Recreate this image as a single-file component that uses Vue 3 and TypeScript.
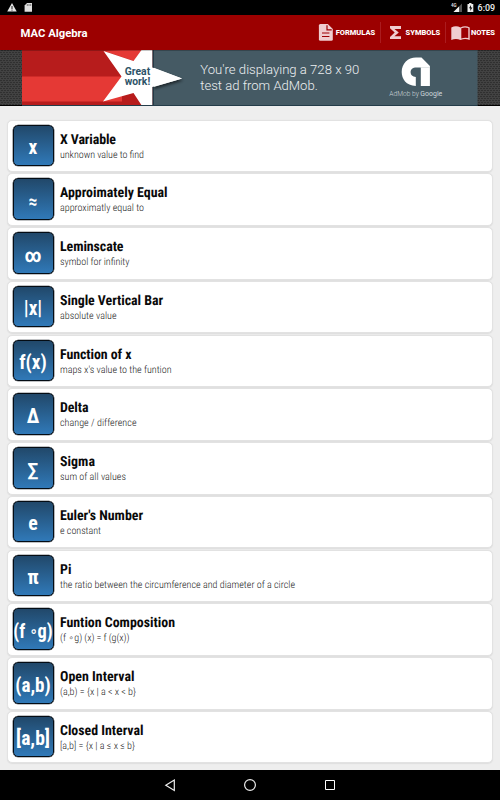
<script setup lang="ts">
interface Entry {
  symbol: string
  symbolWidth: number
  title: string
  titleWidth: number
  note: string
  noteWidth: number
}

const entries: Entry[] = [
  { symbol: 'x', symbolWidth: 8.8, title: 'X Variable', titleWidth: 56, note: 'unknown value to find', noteWidth: 84 },
  { symbol: '≈', symbolWidth: 9, title: 'Approimately Equal', titleWidth: 107.5, note: 'approximatly equal to', noteWidth: 84 },
  { symbol: '∞', symbolWidth: 17, title: 'Leminscate', titleWidth: 63.5, note: 'symbol for infinity', noteWidth: 69.5 },
  { symbol: '|x|', symbolWidth: 18.5, title: 'Single Vertical Bar', titleWidth: 103, note: 'absolute value', noteWidth: 56.5 },
  { symbol: 'f(x)', symbolWidth: 27.5, title: 'Function of x', titleWidth: 71.5, note: "maps x's value to the funtion", noteWidth: 111.5 },
  { symbol: 'Δ', symbolWidth: 12.5, title: 'Delta', titleWidth: 28.5, note: 'change / difference', noteWidth: 76.5 },
  { symbol: '∑', symbolWidth: 11, title: 'Sigma', titleWidth: 35, note: 'sum of all values', noteWidth: 66 },
  { symbol: 'e', symbolWidth: 9.5, title: "Euler's Number", titleWidth: 83, note: 'e constant', noteWidth: 41 },
  { symbol: 'π', symbolWidth: 11.5, title: 'Pi', titleWidth: 11.5, note: 'the ratio between the circumference and diameter of a circle', noteWidth: 235 },
  { symbol: '(f ∘g)', symbolWidth: 39.5, title: 'Funtion Composition', titleWidth: 115, note: '(f ∘g) (x) = f (g(x))', noteWidth: 69.5 },
  { symbol: '(a,b)', symbolWidth: 35.5, title: 'Open Interval', titleWidth: 74.5, note: '(a,b) = {x | a < x < b}', noteWidth: 76 },
  { symbol: '[a,b]', symbolWidth: 34, title: 'Closed Interval', titleWidth: 83.5, note: '[a,b] = {x | a ≤ x ≤ b}', noteWidth: 75 },
]

// The composition ring is set smaller than the letters around it.
const aroundRing = (text: string): string[] => text.split('∘')
</script>

<template>
  <div class="screen">
    <div class="status">
      <svg width="500" height="15" viewBox="0 0 500 15">
        <path d="M12 3 16.7 11.5H7.2Z" fill="#e6e6e6" />
        <path d="M12 6v3M12 9.6v1" stroke="#222" stroke-width="1" />
        <path d="M27 3h5v8.7h-7.4V5.5Z" fill="#e0e0e0" />
        <path d="M27.3 4v2M29 4v2M30.7 4v2" stroke="#555" stroke-width=".7" />
        <text x="451" y="6.6" class="net">4G</text>
        <path d="M462 3.5V12h-8.5Z" fill="#555" />
        <path d="M459 6.5V12h-5.5Z" fill="#f2f2f2" />
        <path d="M467.5 4h1.6V3h2.4v1h1.8v8h-5.8Z" fill="#eee" />
        <path d="m471 5-2 3.2h1.3V11l2.1-3.5H471Z" fill="#111" />
        <text x="477.6" y="11.1" class="clock" textLength="17.5" lengthAdjust="spacingAndGlyphs">6:09</text>
      </svg>
    </div>

    <header class="bar">
      <svg width="500" height="35" viewBox="0 15 500 35">
        <text x="20.6" y="37" class="brand" textLength="67" lengthAdjust="spacingAndGlyphs">MAC Algebra</text>
        <path d="M320.3 24h7.5l5 5v10.3q0 1.5-1.5 1.5h-11q-1.4 0-1.4-1.5V25.5q0-1.5 1.4-1.5Z" fill="#f0cdd0" />
        <path d="M327 25.2v4.6h4.7M322 33h7.4M322 36.5h7.4" fill="none" stroke="#9c0004" stroke-width="1.2" />
        <text x="335.7" y="35.4" class="tab" textLength="39.5" lengthAdjust="spacingAndGlyphs">FORMULAS</text>
        <path d="M380.5 22v21M445.5 22v21" stroke="#ab1c1f" stroke-width="1" />
        <path d="M390 26h11v2.9h-6.6l4.4 3.7-4.4 3.6h6.6V39h-11v-2.1l4.7-4.3-4.7-4.4Z" fill="#f0cdd0" />
        <text x="405.6" y="35.4" class="tab" textLength="34.6" lengthAdjust="spacingAndGlyphs">SYMBOLS</text>
        <path d="M451.3 27.4q4.7-2.3 9.2 0 4.6-2.3 9.2 0V40q-4.6-2-9.2 0-4.5-2-9.2 0Z" fill="#f0cdd0" />
        <path d="M461.3 28.3q3.5-1.5 7-.2v9.9q-3.300-.9-7 .4Z" fill="#9c0004" />
        <text x="471" y="35.4" class="tab" textLength="24" lengthAdjust="spacingAndGlyphs">NOTES</text>
      </svg>
    </header>

    <div class="ad">
      <svg width="500" height="56" viewBox="0 50 500 56">
        <defs>
          <pattern id="mesh" width="3" height="4" patternUnits="userSpaceOnUse">
            <path d="M0 0h2v1H0ZM1 2h2v1H1Z" fill="#303030" />
          </pattern>
          <filter id="shade" x="-20%" y="-20%" width="140%" height="140%">
            <feDropShadow dx="1" dy="2" stdDeviation="1.8" flood-opacity=".6" />
          </filter>
        </defs>
        <path d="M0 50h500v56H0Z" fill="#424242" />
        <path d="M0 50h500v56H0Z" fill="url(#mesh)" />
        <path d="M22 50h131v56H22Z" fill="#b71c1c" />
        <path d="M22 76.500h100V101.500H22Z" fill="#e53935" />
        <path d="M104 51 122 50h20l-8 11Z" fill="#e53935" />
        <path d="M153 50h324.500v56H153Z" fill="#455a64" />
        <path d="M153 67.500 182 78.500 153 87Z" fill="#fff" filter="url(#shade)" />
        <path d="M153 50v56" stroke="#17303c" stroke-width="1.500" />
        <path d="M103.500 51 133.500 61 141.500 50H152.300V67.500L182 78.500 152.300 87V106H142L133.500 93 103 101.500 121.500 76.500Z" fill="#fff" />
        <text x="124.700" y="75" class="star" textLength="25.500" lengthAdjust="spacingAndGlyphs">Great</text>
        <text x="124.700" y="84.800" class="star" textLength="25.500" lengthAdjust="spacingAndGlyphs">work!</text>
        <text x="200.300" y="74" class="pitch" textLength="159" lengthAdjust="spacingAndGlyphs">You're displaying a 728 x 90</text>
        <text x="200.300" y="90" class="pitch" textLength="117.500" lengthAdjust="spacingAndGlyphs">test ad from AdMob.</text>
        <path d="M415.800 86C406 85.500 401.700 79 401.700 72C401.700 63.500 408 57.500 416 57.500H421.500L429.900 66V86H420.800V67.500H416.500C412.500 67.500 410.600 69.300 410.600 72.300C410.600 75 412.500 77 415.800 77Z" fill="#fff" />
        <path d="M421 67.500h8.800" stroke="#d7dcde" stroke-width=".7" />
        <text x="389.300" y="95.700" class="by" textLength="29.500" lengthAdjust="spacingAndGlyphs">AdMob by</text>
        <text x="420.300" y="95.700" class="google" textLength="22" lengthAdjust="spacingAndGlyphs">Google</text>
        <path d="M0 105.500h22M477.500 105.500H500" stroke="#000" />
        <path d="M22 105.500h455.500" stroke="#243c49" stroke-width="1" />
        <path d="M0 50.400h500" stroke="#000" stroke-opacity=".25" />
      </svg>
    </div>

    <main class="list">
      <article v-for="e in entries" :key="e.title" class="card">
        <div class="tile">
          <svg width="38" height="38" viewBox="0 0 38 38">
            <text v-if="e.symbol.includes('∘')" x="19" y="27.700" class="symbol" text-anchor="middle" :textLength="e.symbolWidth" lengthAdjust="spacingAndGlyphs">{{ aroundRing(e.symbol)[0] }}<tspan class="ring" dy="-2">∘</tspan><tspan dy="2">{{ aroundRing(e.symbol)[1] }}</tspan></text>
            <text v-else x="19" y="27.700" class="symbol" text-anchor="middle" :textLength="e.symbolWidth" lengthAdjust="spacingAndGlyphs">{{ e.symbol }}</text>
          </svg>
        </div>
        <svg class="words" width="420" height="41" viewBox="0 0 420 41">
          <text x="0" y="18.600" class="title" :textLength="e.titleWidth" lengthAdjust="spacing">{{ e.title }}</text>
          <text x="0" y="32.800" class="note" :textLength="e.noteWidth" lengthAdjust="spacing">{{ e.note }}</text>
        </svg>
      </article>
    </main>

    <nav class="nav">
      <svg width="500" height="30" viewBox="0 770 500 30">
        <path d="M174.300 780v10.500L165.800 785.200Z" fill="none" stroke="#eee" stroke-width="1.200" />
        <circle cx="250" cy="785" r="5.400" fill="none" stroke="#eee" stroke-width="1.200" />
        <path d="M325.500 780.500h9v9h-9Z" fill="none" stroke="#fff" />
      </svg>
    </nav>
  </div>
</template>

<style>
body {
  margin: 0;
}
</style>

<style scoped>
.screen {
  width: 500px;
  height: 800px;
  display: flex;
  flex-direction: column;
  overflow: hidden;
  background: #eeeeee;
  font-family: "Roboto Condensed", Roboto, "Noto Sans", "DejaVu Sans", sans-serif;
}
svg {
  display: block;
  flex: none;
  overflow: visible;
}
.status {
  height: 15px;
  background: #000;
}
.bar {
  height: 35px;
  background: #9c0000;
}
.ad {
  height: 56px;
  overflow: hidden;
}
.status,
.bar,
.ad {
  font-family: Roboto, sans-serif;
}
.net {
  font-size: 4.5px;
  font-weight: 700;
  fill: #ddd;
}
.clock {
  font-size: 9px;
  font-weight: 500;
  fill: #eee;
}
.brand {
  font-size: 11.5px;
  font-weight: 700;
  fill: #fff;
}
.tab {
  font-size: 7.6px;
  font-weight: 800;
  fill: #fff;
}
.star {
  font-size: 10px;
  font-weight: 700;
  fill: #2d5368;
}
.pitch {
  font-size: 12.8px;
  font-weight: 300;
  fill: #eceff1;
}
.by {
  font-size: 6.8px;
  font-weight: 300;
  fill: #cfd8dc;
}
.google {
  font-size: 7.3px;
  fill: #cfd8dc;
}
.list {
  flex: 1;
  padding: 13.5px 7px 0;
}
.card {
  box-sizing: border-box;
  height: 52.5px;
  margin-bottom: 1.26px;
  padding: 4px 4.5px;
  display: flex;
  border: 1px solid #e2e2e2;
  border-radius: 5px;
  background: #fff;
  box-shadow: 0 0.5px 1px #dedede;
}
.tile {
  box-sizing: border-box;
  width: 41px;
  height: 41.5px;
  padding: 0.5px;
  border: 1px solid #040c14;
  border-radius: 5px;
  background: linear-gradient(#21486a, #3079b8);
  box-shadow: 0 0 0 0.3px #040c14;
}
.words {
  margin-left: 6.5px;
}
.symbol {
  font-size: 19.5px;
  font-weight: 700;
  fill: #fff;
}
.ring {
  font-size: 14px;
}
.title {
  font-size: 13.9px;
  font-weight: 700;
  fill: #0a0a0a;
  text-rendering: geometricPrecision;
}
.note {
  font-size: 10.1px;
  font-weight: 300;
  fill: #222;
  text-rendering: geometricPrecision;
}
.nav {
  height: 30px;
  background: #000;
}
</style>
